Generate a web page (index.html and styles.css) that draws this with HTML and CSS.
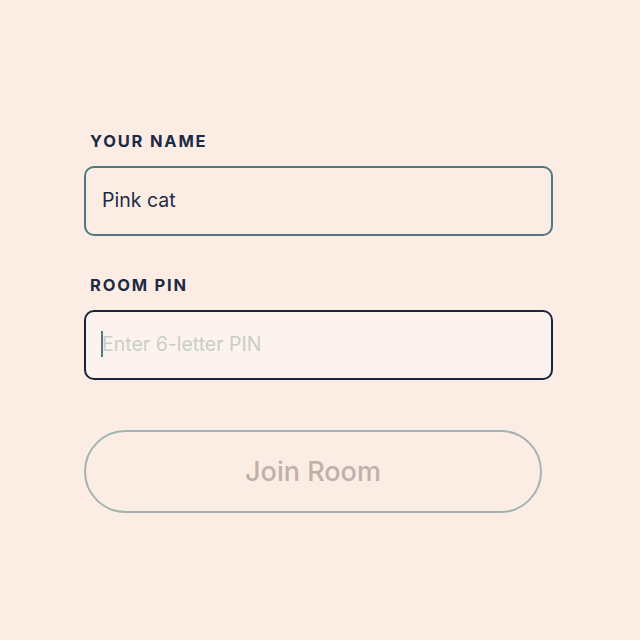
FILE: index.html
```html
<!DOCTYPE html>
<html lang="en">
  <head>
    <meta charset="UTF-8" />
    <meta name="viewport" content="width=device-width, initial-scale=1.0" />
    <title>Join Room</title>
    <link rel="stylesheet" href="styles.css">
  </head>
  <body>
    <form class="join-form">
      <label class="field-label" for="name">Your name</label>
      <input class="field-input" id="name" type="text" value="Pink cat" />

      <label class="field-label" for="pin">Room PIN</label>
      <div class="input-wrap">
        <input class="field-input focused" id="pin" type="text" placeholder="Enter 6-letter PIN" />
        <span class="caret"></span>
      </div>

      <button class="join-button" type="button">Join Room</button>
    </form>
  </body>
</html>
```

FILE: styles.css
```css
/* Reset dan dasar */
* {
  box-sizing: border-box;
  margin: 0;
  padding: 0;
}
body {
  font-family: Inter, "Noto Sans", Arial, sans-serif;
  background-color: #fcede4;
  height: 100vh;
  overflow: hidden;
}

/* Form */
.join-form {
  display: flex;
  flex-direction: column;
  align-items: flex-start;
  padding: 131px 0 0 84px;
  width: 553px;
}
.field-label {
  display: block;
  padding-left: 6px;
  font-size: 16.5px;
  line-height: 20px;
  font-weight: 700;
  letter-spacing: 1.8px;
  text-transform: uppercase;
  color: #1c2a45;
  margin-bottom: 15px;
}
.field-input {
  width: 100%;
  height: 70px;
  padding: 0 16px 2px;
  font-family: inherit;
  font-size: 19.5px;
  color: #1c2a45;
  background-color: #fcede4;
  border: 2px solid #4c7a80;
  border-radius: 10px;
  outline: none;
  caret-color: #4c7a80;
  margin-bottom: 39px;
}
.field-input::placeholder {
  color: #c9cec8;
}

/* Field yang sedang aktif */
.input-wrap {
  position: relative;
  width: 100%;
  margin-bottom: 50px;
}
.input-wrap .field-input {
  margin-bottom: 0;
}
.field-input.focused {
  background-color: #fdf3ee;
  border-color: #1a2440;
}
.caret {
  position: absolute;
  left: 17px;
  top: 21px;
  width: 1.5px;
  height: 26px;
  background-color: #4c7a80;
}

.join-button {
  width: 458px;
  height: 83px;
  font-family: inherit;
  font-size: 27px;
  font-weight: 500;
  color: #bfb1a9;
  background: transparent;
  border: 2px solid #a3b3b3;
  border-radius: 42px;
  cursor: not-allowed;
}
```
